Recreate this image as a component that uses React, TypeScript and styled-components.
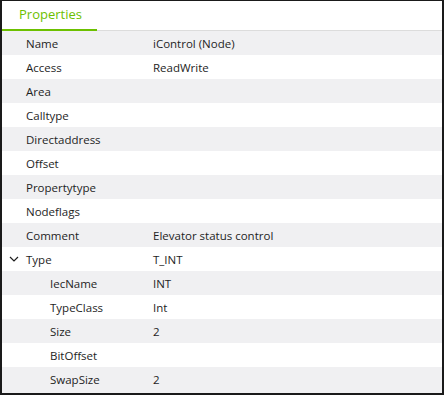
import React from 'react';
import styled, { createGlobalStyle } from 'styled-components';

const GlobalStyle = createGlobalStyle`
  html, body {
    margin: 0;
    padding: 0;
    background: #ffffff;
  }
`;

const Panel = styled.div`
  box-sizing: border-box;
  width: 444px;
  height: 395px;
  border-style: solid;
  border-color: #1a1a1a;
  border-width: 1px 2px 2px 2px;
  background: #f0f0f2;
  display: flex;
  flex-direction: column;
  font-family: 'Open Sans', 'Noto Sans', sans-serif;
  overflow: hidden;
`;

const TabBar = styled.div`
  box-sizing: border-box;
  height: 30px;
  flex: none;
  display: flex;
  background: #ffffff;
  border-bottom: 1px solid #dcdcdc;
`;

const Tab = styled.div`
  box-sizing: border-box;
  width: 95px;
  height: 30px;
  padding-left: 17px;
  padding-top: 4px;
  border-bottom: 2px solid #6cc000;
  color: #6cc000;
  font-size: 13px;
`;

const Rows = styled.div`
  display: flex;
  flex-direction: column;
`;

const Row = styled.div<{ $odd: boolean }>`
  height: 24px;
  display: grid;
  grid-template-columns: 151px 1fr;
  align-items: center;
  background: ${({ $odd }) => ($odd ? '#ffffff' : '#f0f0f2')};
  font-size: 11.5px;
  color: #1e1e1e;
`;

const Label = styled.div<{ $depth: number }>`
  display: flex;
  align-items: center;
  padding-left: ${({ $depth }) => $depth * 24}px;
  white-space: nowrap;
`;

const Expander = styled.span`
  width: 24px;
  flex: none;
  display: flex;
  align-items: center;
  justify-content: center;
`;

const Value = styled.div`
  white-space: nowrap;
`;

type Prop = { name: string; value?: string; depth?: number; expanded?: boolean };

const props: Prop[] = [
  { name: 'Name', value: 'iControl (Node)' },
  { name: 'Access', value: 'ReadWrite' },
  { name: 'Area' },
  { name: 'Calltype' },
  { name: 'Directaddress' },
  { name: 'Offset' },
  { name: 'Propertytype' },
  { name: 'Nodeflags' },
  { name: 'Comment', value: 'Elevator status control' },
  { name: 'Type', value: 'T_INT', expanded: true },
  { name: 'IecName', value: 'INT', depth: 1 },
  { name: 'TypeClass', value: 'Int', depth: 1 },
  { name: 'Size', value: '2', depth: 1 },
  { name: 'BitOffset', depth: 1 },
  { name: 'SwapSize', value: '2', depth: 1 },
];

const Chevron = () => (
  <svg width="10" height="6" viewBox="0 0 10 6">
    <path d="M1 1 L5 5 L9 1" fill="none" stroke="#1e1e1e" strokeWidth="1.2" />
  </svg>
);

const App = () => (
  <>
    <GlobalStyle />
    <Panel>
      <TabBar>
        <Tab>Properties</Tab>
      </TabBar>
      <Rows>
        {props.map((p, i) => (
          <Row key={p.name} $odd={i % 2 === 1}>
            <Label $depth={p.depth ?? 0}>
              <Expander>{p.expanded && <Chevron />}</Expander>
              {p.name}
            </Label>
            <Value>{p.value}</Value>
          </Row>
        ))}
      </Rows>
    </Panel>
  </>
);

export default App;
